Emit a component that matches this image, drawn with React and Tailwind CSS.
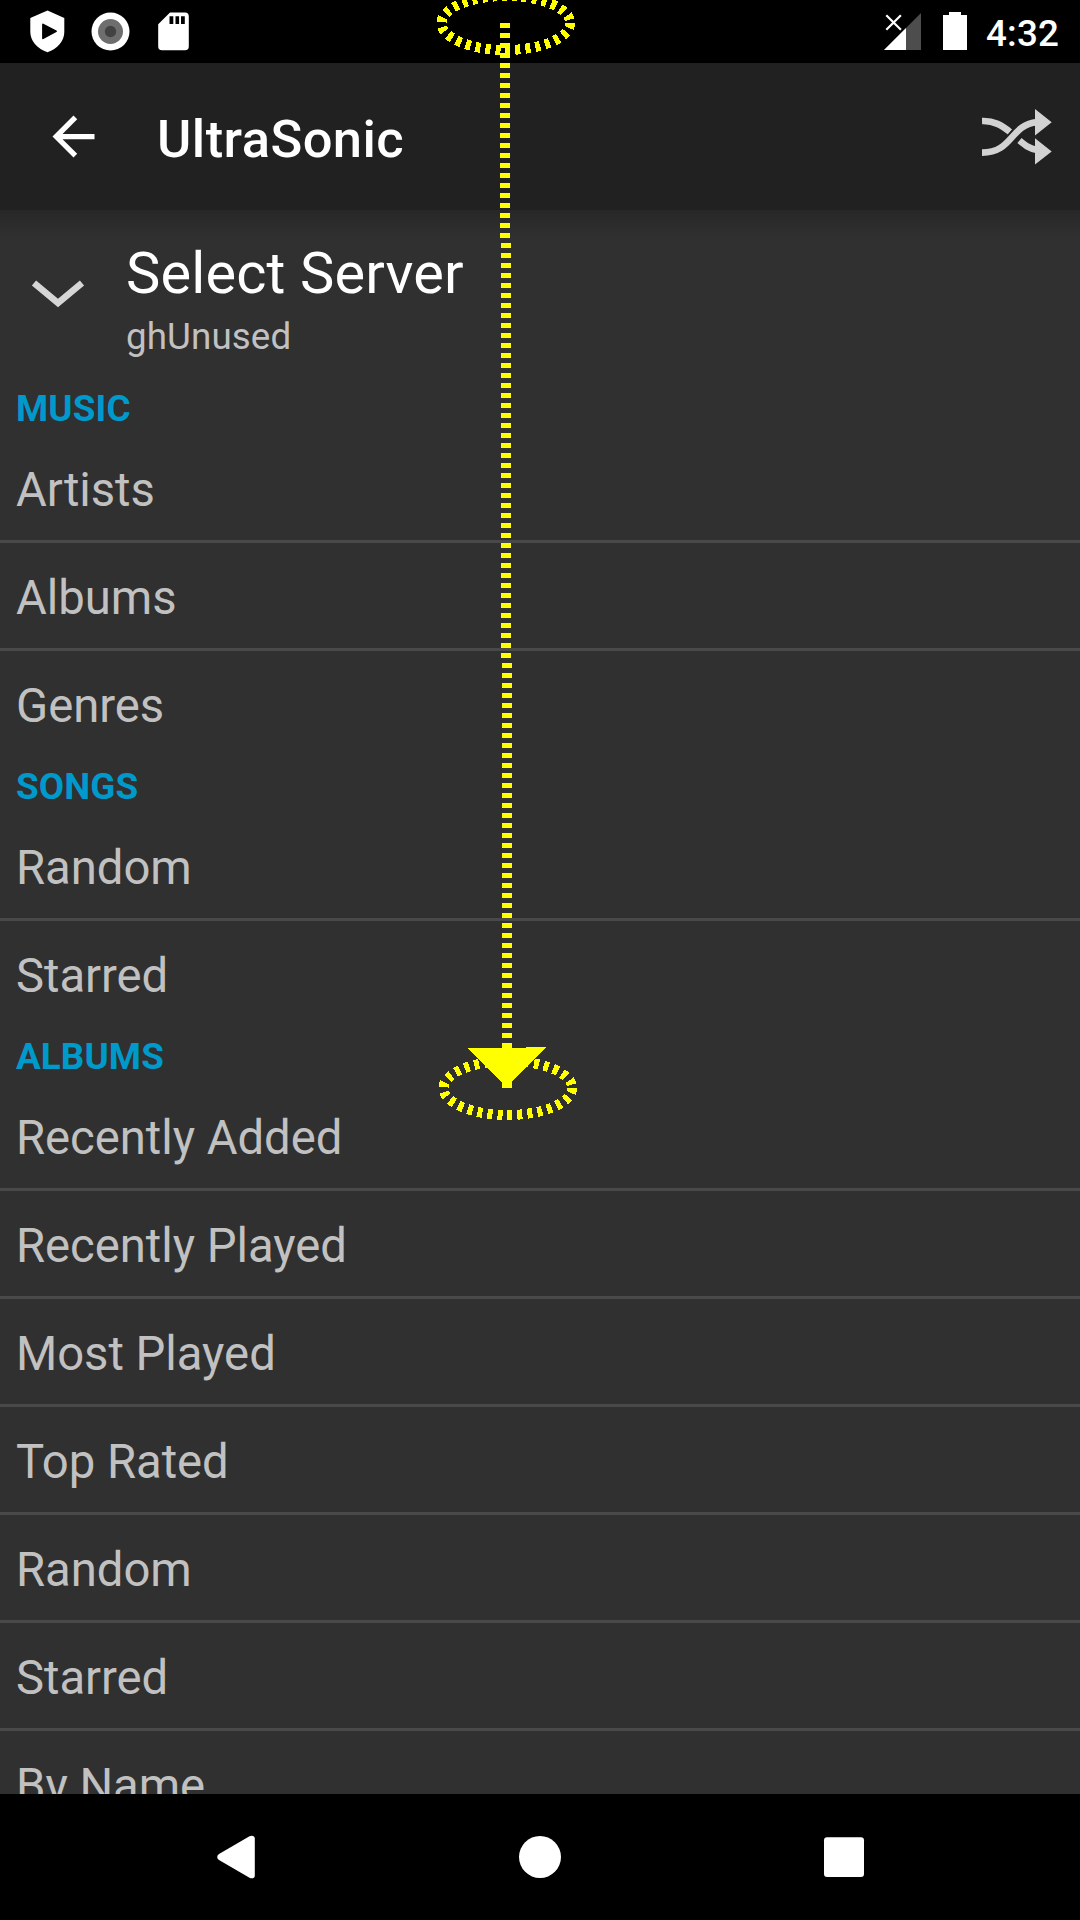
const SECTIONS = [
  { title: 'MUSIC', items: ['Artists', 'Albums', 'Genres'] },
  { title: 'SONGS', items: ['Random', 'Starred'] },
  {
    title: 'ALBUMS',
    items: ['Recently Added', 'Recently Played', 'Most Played', 'Top Rated', 'Random', 'Starred', 'By Name'],
  },
];

function StatusBar() {
  return (
    <div className="flex h-[63px] shrink-0 items-center justify-between bg-black">
      <svg width="220" height="63" viewBox="0 0 220 63" fill="#fff">
        <path d="M47.5 10.5 64.3 18v14c0 9-7 17-16.8 20.3C37.500 49 30.300 41 30.300 32V18z" />
        <path d="M43 24.500 56 31.300 43 38.300z" fill="#000" stroke="#000" strokeWidth="1.800" strokeLinejoin="round" />
        <circle cx="110.500" cy="31.500" r="19" />
        <circle cx="110.500" cy="31.500" r="12.500" fill="#6e6e6e" />
        <circle cx="110.500" cy="31.500" r="5.700" fill="#424242" />
        <path d="M170 12.500h15a3.800 3.800 0 0 1 3.800 3.800v30.200a3.800 3.800 0 0 1-3.800 3.800h-23a3.800 3.800 0 0 1-3.800-3.800V24.300z" />
        <path d="M169.500 16.300h3.800V24h-3.800zM175.500 16.300h3.600V24h-3.600zM181 16.300h3.800V24H181z" fill="#000" />
      </svg>
      <div className="flex w-[200px] items-center">
        <svg className="shrink-0" width="106" height="63" viewBox="0 0 106 63">
          <path d="M4 50 41 13v37z" fill="#4d4d4d" />
          <path d="M4 50 26 28v22z" fill="#fff" />
          <path d="m6.300 15.300 14.600 14.400M20.900 15.300 6.300 29.700" stroke="#fff" strokeWidth="2.200" />
          <path d="M69 12h12v3h6v35H63V15h6z" fill="#fff" />
        </svg>
        <span className="pt-[4px] text-[36.75px] leading-[60px] font-medium tracking-[0.2px] text-white">4:32</span>
      </div>
    </div>
  );
}

function AppBar() {
  return (
    <header className="flex h-[147px] shrink-0 items-center bg-[#212121] text-white">
      <svg className="ml-[42px]" width="63" height="63" viewBox="0 0 24 24" fill="#fff">
        <path d="M20 11H7.830l5.590-5.590L12 4l-8 8 8 8 1.410-1.410L7.830 13H20v-2z" />
      </svg>
      <h1 className="ml-[52px] pt-[5px] text-[52.5px] leading-[60px] font-medium tracking-[0.45px]">UltraSonic</h1>
      <svg className="mr-[26px] ml-auto" width="72" height="60" viewBox="0 0 72 60" fill="none">
        <path d="M0 14c12-.5 20 4.500 28 11" stroke="#d2d2d2" strokeWidth="6.600" />
        <path d="M37.500 33.500c6 5 9.500 8 17.500 9.500" stroke="#d2d2d2" strokeWidth="6.600" />
        <path d="M0 45.600c31 0 28-28 55-30.500" stroke="#212121" strokeWidth="10" />
        <path d="M0 45.600c31 0 28-28 55-30.500" stroke="#d2d2d2" strokeWidth="6.600" />
        <path d="M53 2 69.700 15.200 53 28.500zM53 31.300 69.700 44.400 53 57.500z" fill="#d2d2d2" />
      </svg>
    </header>
  );
}

function ServerRow() {
  return (
    <div className="flex h-[168px] shrink-0 bg-linear-to-b from-[#272727] to-[#303030] to-[27px]">
      <svg className="mt-[66px] ml-[30px] shrink-0" width="56" height="36" viewBox="0 0 56 36" fill="none">
        <path d="m4 7 24 20 24-20" stroke="#d6d6d6" strokeWidth="6.600" />
      </svg>
      <div className="ml-[40px] pt-[30px]">
        <div className="text-[57.75px] leading-[66px] tracking-[0.15px] text-white">Select Server</div>
        <div className="mt-[9px] text-[36.75px] leading-[44px] tracking-[0.1px] text-[#c1c1c1]">ghUnused</div>
      </div>
    </div>
  );
}

function Section({ title, items }) {
  return (
    <section className="shrink-0">
      <h2 className="h-[57px] px-4 pt-[4px] text-[36.75px] leading-[53px] font-bold tracking-[0.15px] text-[#0099cc]">
        {title}
      </h2>
      <ul className="divide-y-3 divide-[#494949]">
        {items.map((item) => (
          <li key={item} className="box-content h-[105px]">
            <div className="px-4 pt-[5px] text-[47.25px] leading-[100px] tracking-[-0.04px] text-[#c1c1c1]">{item}</div>
          </li>
        ))}
      </ul>
    </section>
  );
}

function NavBar() {
  return (
    <nav className="flex h-[126px] shrink-0 items-center justify-center gap-[212px] bg-black">
      <svg width="80" height="80" viewBox="0 0 80 80" fill="#fff">
        <path d="M41.500 19.300c2-1.200 5.300-.8 5.300 2v37.400c0 2.800-3.300 3.200-5.300 2L11 43c-2.300-1.500-2.300-4.500 0-6z" />
      </svg>
      <svg width="80" height="80" viewBox="0 0 80 80" fill="#fff">
        <circle cx="40" cy="40" r="21" />
      </svg>
      <svg width="80" height="80" viewBox="0 0 80 80" fill="#fff">
        <rect x="32" y="20.300" width="40" height="39.700" rx="3" />
      </svg>
    </nav>
  );
}

/* Swipe gesture drawn over the screen: start ring, dotted path, arrow and end ring. */
function GestureOverlay() {
  return (
    <svg
      className="pointer-events-none absolute inset-0"
      width="1080"
      height="1920"
      viewBox="0 0 1080 1920"
      fill="none"
      stroke="#ff0"
      strokeWidth="10"
      shapeRendering="crispEdges"
    >
      <ellipse cx="505.800" cy="23" rx="64.300" ry="27" strokeDasharray="5 5" />
      <ellipse cx="507.800" cy="1088" rx="64.300" ry="27" strokeDasharray="5 5" />
      <path d="M505 23 507.500 1088" strokeDasharray="5 5" />
      <path d="M467 1048h59v-1h20l-34 34v7h-10v-6z" fill="#ff0" stroke="none" />
    </svg>
  );
}

export default function App() {
  return (
    <div className="relative flex h-[1920px] w-[1080px] flex-col overflow-hidden bg-[#303030] font-[Roboto,sans-serif]">
      <StatusBar />
      <AppBar />
      <main className="flex min-h-0 flex-1 flex-col overflow-hidden">
        <ServerRow />
        {SECTIONS.map((section) => (
          <Section key={section.title} title={section.title} items={section.items} />
        ))}
      </main>
      <NavBar />
      <GestureOverlay />
    </div>
  );
}
